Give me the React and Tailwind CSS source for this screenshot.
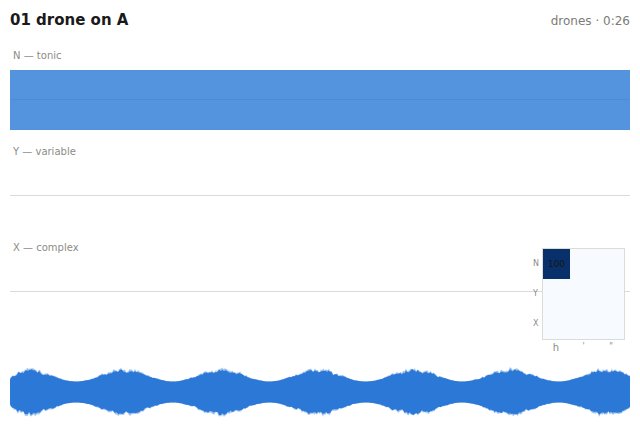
import React from "react";

// Deterministic PRNG so the waveform is stable between renders
function mulberry32(a) {
  return function () {
    a |= 0;
    a = (a + 0x6d2b79f5) | 0;
    let t = Math.imul(a ^ (a >>> 15), 1 | a);
    t = (t + Math.imul(t ^ (t >>> 7), 61 | t)) ^ t;
    return ((t ^ (t >>> 14)) >>> 0) / 4294967296;
  };
}

function buildWave(width, height) {
  const rand = mulberry32(7);
  const mid = height / 2;
  const top = [];
  const bot = [];
  const fuzzTop = [];
  const fuzzBot = [];
  for (let x = 0; x <= width; x += 1) {
    const phase = (2 * Math.PI * (x + 10 - 28)) / 96.5;
    const env = (Math.cos(phase) + 1) / 2; // 0..1
    let a = 10.5 + 10.5 * env;
    const fade = Math.min(1, 0.72 + x / 45);
    a *= fade;
    const ripple =
      Math.sin(x / 1.1) * 0.6 * env +
      Math.sin(x / 3.3 + Math.sin(x / 17)) * 0.9 * env;
    const jt = (rand() - 0.4) * 2.4 * env;
    const jb = (rand() - 0.4) * 2.4 * env;
    top.push([x, mid - a - ripple - jt]);
    bot.push([x, mid + a + ripple + jb]);
    fuzzTop.push([x, mid - a - ripple - jt - rand() * 2.5 * env]);
    fuzzBot.push([x, mid + a + ripple + jb + rand() * 2.5 * env]);
  }
  const toPath = (t, b) =>
    "M" +
    t.map((p) => `${p[0]},${p[1].toFixed(2)}`).join("L") +
    "L" +
    b
      .slice()
      .reverse()
      .map((p) => `${p[0]},${p[1].toFixed(2)}`)
      .join("L") +
    "Z";
  return { main: toPath(top, bot), fuzz: toPath(fuzzTop, fuzzBot) };
}

const WAVE = buildWave(620, 60);

function Lane({ label, filled }) {
  return (
    <section className="flex h-[96px] flex-col">
      <div className="h-[14px] pl-[3px] pt-px text-[10px] leading-[14px] text-[#8c8c88]">{label}</div>
      <div className={`mt-[8px] h-[60px] pt-[29px] ${filled ? "bg-[#5493dd]" : ""}`}>
        <div className={`h-px ${filled ? "bg-[#4d8bd6]" : "bg-[#dcdcd6]"}`} />
      </div>
    </section>
  );
}

function Heatmap() {
  const rows = ["N", "Y", "X"];
  const cols = ["h", "'", '"'];
  return (
    <div className="absolute left-[533px] top-[248px] text-[8px] leading-none text-[#8c8c88]">
      <div className="flex">
        <div className="flex w-[9px] flex-col pt-px">
          {rows.map((r) => (
            <div key={r} className="flex h-[30px] items-center">
              {r}
            </div>
          ))}
        </div>
        <div className="h-[92px] w-[83px] border border-[#dcdcd6] bg-[#f7fbff]">
          <div className="grid grid-cols-3 grid-rows-3">
            {rows.map((r, i) =>
              cols.map((c, j) => (
                <div
                  key={r + c}
                  className={`flex h-[30px] items-center justify-center text-[9px] text-[#161616] ${
                    i === 0 && j === 0 ? "h-[29px] w-[27px] bg-[#08306b]" : ""
                  }`}
                >
                  {i === 0 && j === 0 ? "100" : ""}
                </div>
              ))
            )}
          </div>
        </div>
      </div>
      <div className="ml-[9px] flex w-[83px] pt-[3px]">
        {cols.map((c, j) => (
          <div key={j} className={`flex-1 text-center ${j === 0 ? "text-[10px]" : ""}`}>
            {c}
          </div>
        ))}
      </div>
    </div>
  );
}

export default function App() {
  return (
    <div
      className="relative h-[440px] w-[640px] overflow-hidden bg-white px-[10px]"
      style={{ fontFamily: '"DejaVu Sans", "Liberation Sans", sans-serif' }}
    >
      <header className="flex h-[48px] items-start justify-between pt-[9px]">
        <h1 className="text-[15px] font-bold leading-[22px] text-[#1a1a1a]">01 drone on A</h1>
        <div className="pt-[1px] text-[12px] leading-[22px] text-[#7b7b78]">drones · 0:26</div>
      </header>

      <Lane label="N — tonic" filled />
      <Lane label="Y — variable" />
      <Lane label="X — complex" />

      <div className="mt-[26px] h-[60px]">
        <svg width="620" height="60" viewBox="0 0 620 60" className="block">
          <path d={WAVE.fuzz} fill="#2b78d6" fillOpacity="0.45" />
          <path d={WAVE.main} fill="#2b78d6" />
        </svg>
      </div>

      <Heatmap />
    </div>
  );
}
